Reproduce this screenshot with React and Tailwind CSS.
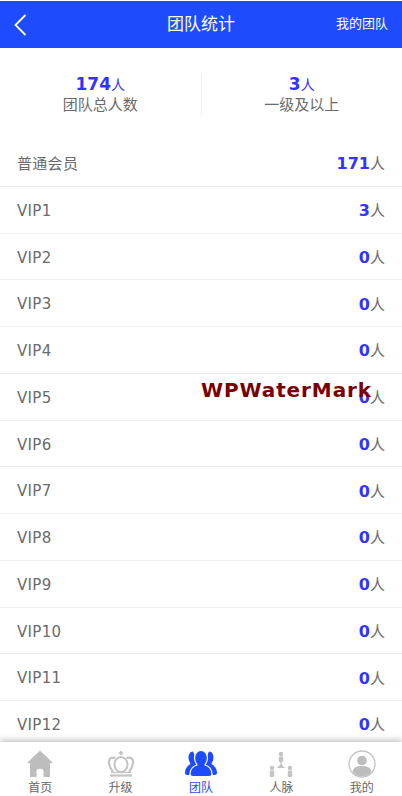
import React from 'react';

const font = { fontFamily: '"DejaVu Sans", "Noto Sans CJK SC", sans-serif' };

const rows = [
  ['普通会员', 171], ['VIP1', 3], ['VIP2', 0], ['VIP3', 0], ['VIP4', 0], ['VIP5', 0], ['VIP6', 0],
  ['VIP7', 0], ['VIP8', 0], ['VIP9', 0], ['VIP10', 0], ['VIP11', 0], ['VIP12', 0],
];

const HomeIcon = () => (
  <svg width="28" height="28" viewBox="0 0 28 28" fill="#bdbdbd">
    <path d="M14 0.500 L27 13 L24 13 L24 27 L17.500 27 L17.500 21 C17.500 18 10.500 18 10.500 21 L10.500 27 L4 27 L4 13 L1 13 Z" />
  </svg>
);

const CrownIcon = () => (
  <svg width="28" height="28" viewBox="0 0 28 28" fill="none" stroke="#c4c4c4" strokeWidth="2">
    <path d="M14 0.500 L16.500 3 L14 5.500 L11.500 3 Z" fill="#c4c4c4" stroke="none" />
    <ellipse cx="14" cy="14.500" rx="6.500" ry="7.500" />
    <path d="M8.500 8 C4 6.500 1.500 9 2 13 C2.300 16.500 4 19.500 6 22" strokeWidth="2.200" />
    <path d="M19.500 8 C24 6.500 26.500 9 26 13 C25.700 16.500 24 19.500 22 22" strokeWidth="2.200" />
    <path d="M4 22.500 H24" strokeWidth="1.200" />
    <path d="M3 25.500 H25" strokeWidth="2.200" />
  </svg>
);

const TeamIcon = () => (
  <svg width="32" height="28" viewBox="0 0 32 28" fill="#1f4bff">
    <path d="M24 1.500 C27 1.500 28.500 4.500 28.500 7.500 C28.500 10.500 27 12.500 26.500 14 C29.500 15.500 32 19 32 23 C32 24.500 31 25 28 25 L22 20 L20 10 Z" />
    <path d="M8 1.500 C5 1.500 3.500 4.500 3.500 7.500 C3.500 10.500 5 12.500 5.500 14 C2.500 15.500 0 19 0 23 C0 24.500 1 25 4 25 L10 20 L12 10 Z" />
    <path d="M16 0.500 C20 0.500 22.500 4 22.500 8 C22.500 11 21 13 20 15 C25 16.500 27 20 27 24.500 C27 26 26 26.500 24 26.500 L8 26.500 C6 26.500 5 26 5 24.500 C5 20 7 16.500 12 15 C11 13 9.500 11 9.500 8 C9.500 4 12 0.500 16 0.500 Z" stroke="white" strokeWidth="1.200" />
  </svg>
);

const NetworkIcon = () => (
  <svg width="28" height="28" viewBox="0 0 28 28" fill="#c4c4c4">
    <circle cx="14" cy="4" r="2.200" />
    <rect x="11.800" y="6.500" width="4.400" height="5.500" rx="1" />
    <path d="M13.300 12 H14.700 V14.500 L18 18 H10 L13.300 14.500 Z" />
    <circle cx="5" cy="18" r="2.200" />
    <rect x="2.800" y="20.500" width="4.400" height="6.500" rx="1" />
    <circle cx="23" cy="18" r="2.200" />
    <rect x="20.800" y="20.500" width="4.400" height="6.500" rx="1" />
  </svg>
);

const MeIcon = () => (
  <svg width="28" height="28" viewBox="0 0 28 28">
    <circle cx="14" cy="14" r="13" fill="none" stroke="#c4c4c4" strokeWidth="1.300" />
    <circle cx="14" cy="10.500" r="4.800" fill="#bdbdbd" />
    <path d="M4.500 22 C5 17.500 9 16 14 16 C19 16 23 17.500 23.500 22 C21 25 18 26.500 14 26.500 C10 26.500 7 25 4.500 22 Z" fill="#bdbdbd" />
  </svg>
);

const tabs = [
  { label: '首页', icon: <HomeIcon /> },
  { label: '升级', icon: <CrownIcon /> },
  { label: '团队', icon: <TeamIcon />, active: true },
  { label: '人脉', icon: <NetworkIcon /> },
  { label: '我的', icon: <MeIcon /> },
];

const Stat = ({ value, label }) => (
  <div className="flex-1 flex flex-col items-center">
    <div className="text-[#3333ff] leading-[20px] mt-[2px]">
      <span className="font-bold text-[17px]">{value}</span>
      <span className="text-[14px]">人</span>
    </div>
    <div className="text-[15px] leading-[21px] text-[#6b6b6b]">{label}</div>
  </div>
);

export default function App() {
  return (
    <div className="relative w-[402px] h-[796px] overflow-hidden bg-white flex flex-col pt-px" style={font}>
      {/* Header */}
      <div className="h-[47px] shrink-0 bg-[#1f4bff] flex items-center justify-between px-[14px] text-white relative">
        <svg width="13" height="22" viewBox="0 0 13 22" fill="none" stroke="white" strokeWidth="1.800">
          <path d="M11.500 1 L1.500 11 L11.500 21" />
        </svg>
        <span className="absolute left-0 right-0 text-center text-[17px]">团队统计</span>
        <span className="text-[13px] relative -mt-[1px]">我的团队</span>
      </div>

      {/* Stats */}
      <div className="h-[92px] shrink-0 flex items-center">
        <Stat value="174" label="团队总人数" />
        <div className="w-px h-[42px] bg-[#eeeeee]" />
        <Stat value="3" label="一级及以上" />
      </div>

      {/* Member rows */}
      <div className="flex-1 overflow-hidden">
        {rows.map(([name, count]) => (
          <div key={name} className="h-[46.75px] flex items-center justify-between pt-[3px] px-[17px] border-b border-[#eeeeee] text-[15px] text-[#6b6b6b]">
            <span className="tracking-[0.3px]">{name}</span>
            <span>
              <span className="font-bold text-[16px] text-[#3333ff]">{count}</span>人
            </span>
          </div>
        ))}
      </div>

      {/* Tab bar */}
      <div className="h-[54px] shrink-0 bg-white flex shadow-[0_-2px_6px_rgba(0,0,0,0.25)] relative">
        {tabs.map((t) => (
          <div key={t.label} className={`flex-1 flex flex-col items-center pt-[8px] text-[12px] leading-[16px] ${t.active ? 'text-[#1f4bff]' : 'text-[#666666]'}`}>
            {t.icon}
            <span className="mt-[2px]">{t.label}</span>
          </div>
        ))}
      </div>

      {/* Watermark */}
      <div className="absolute left-[201px] top-[377px] text-[20px] font-bold leading-[26px] tracking-[0.9px] text-[#7a0000] whitespace-nowrap">
        WPWaterMark
      </div>
    </div>
  );
}
